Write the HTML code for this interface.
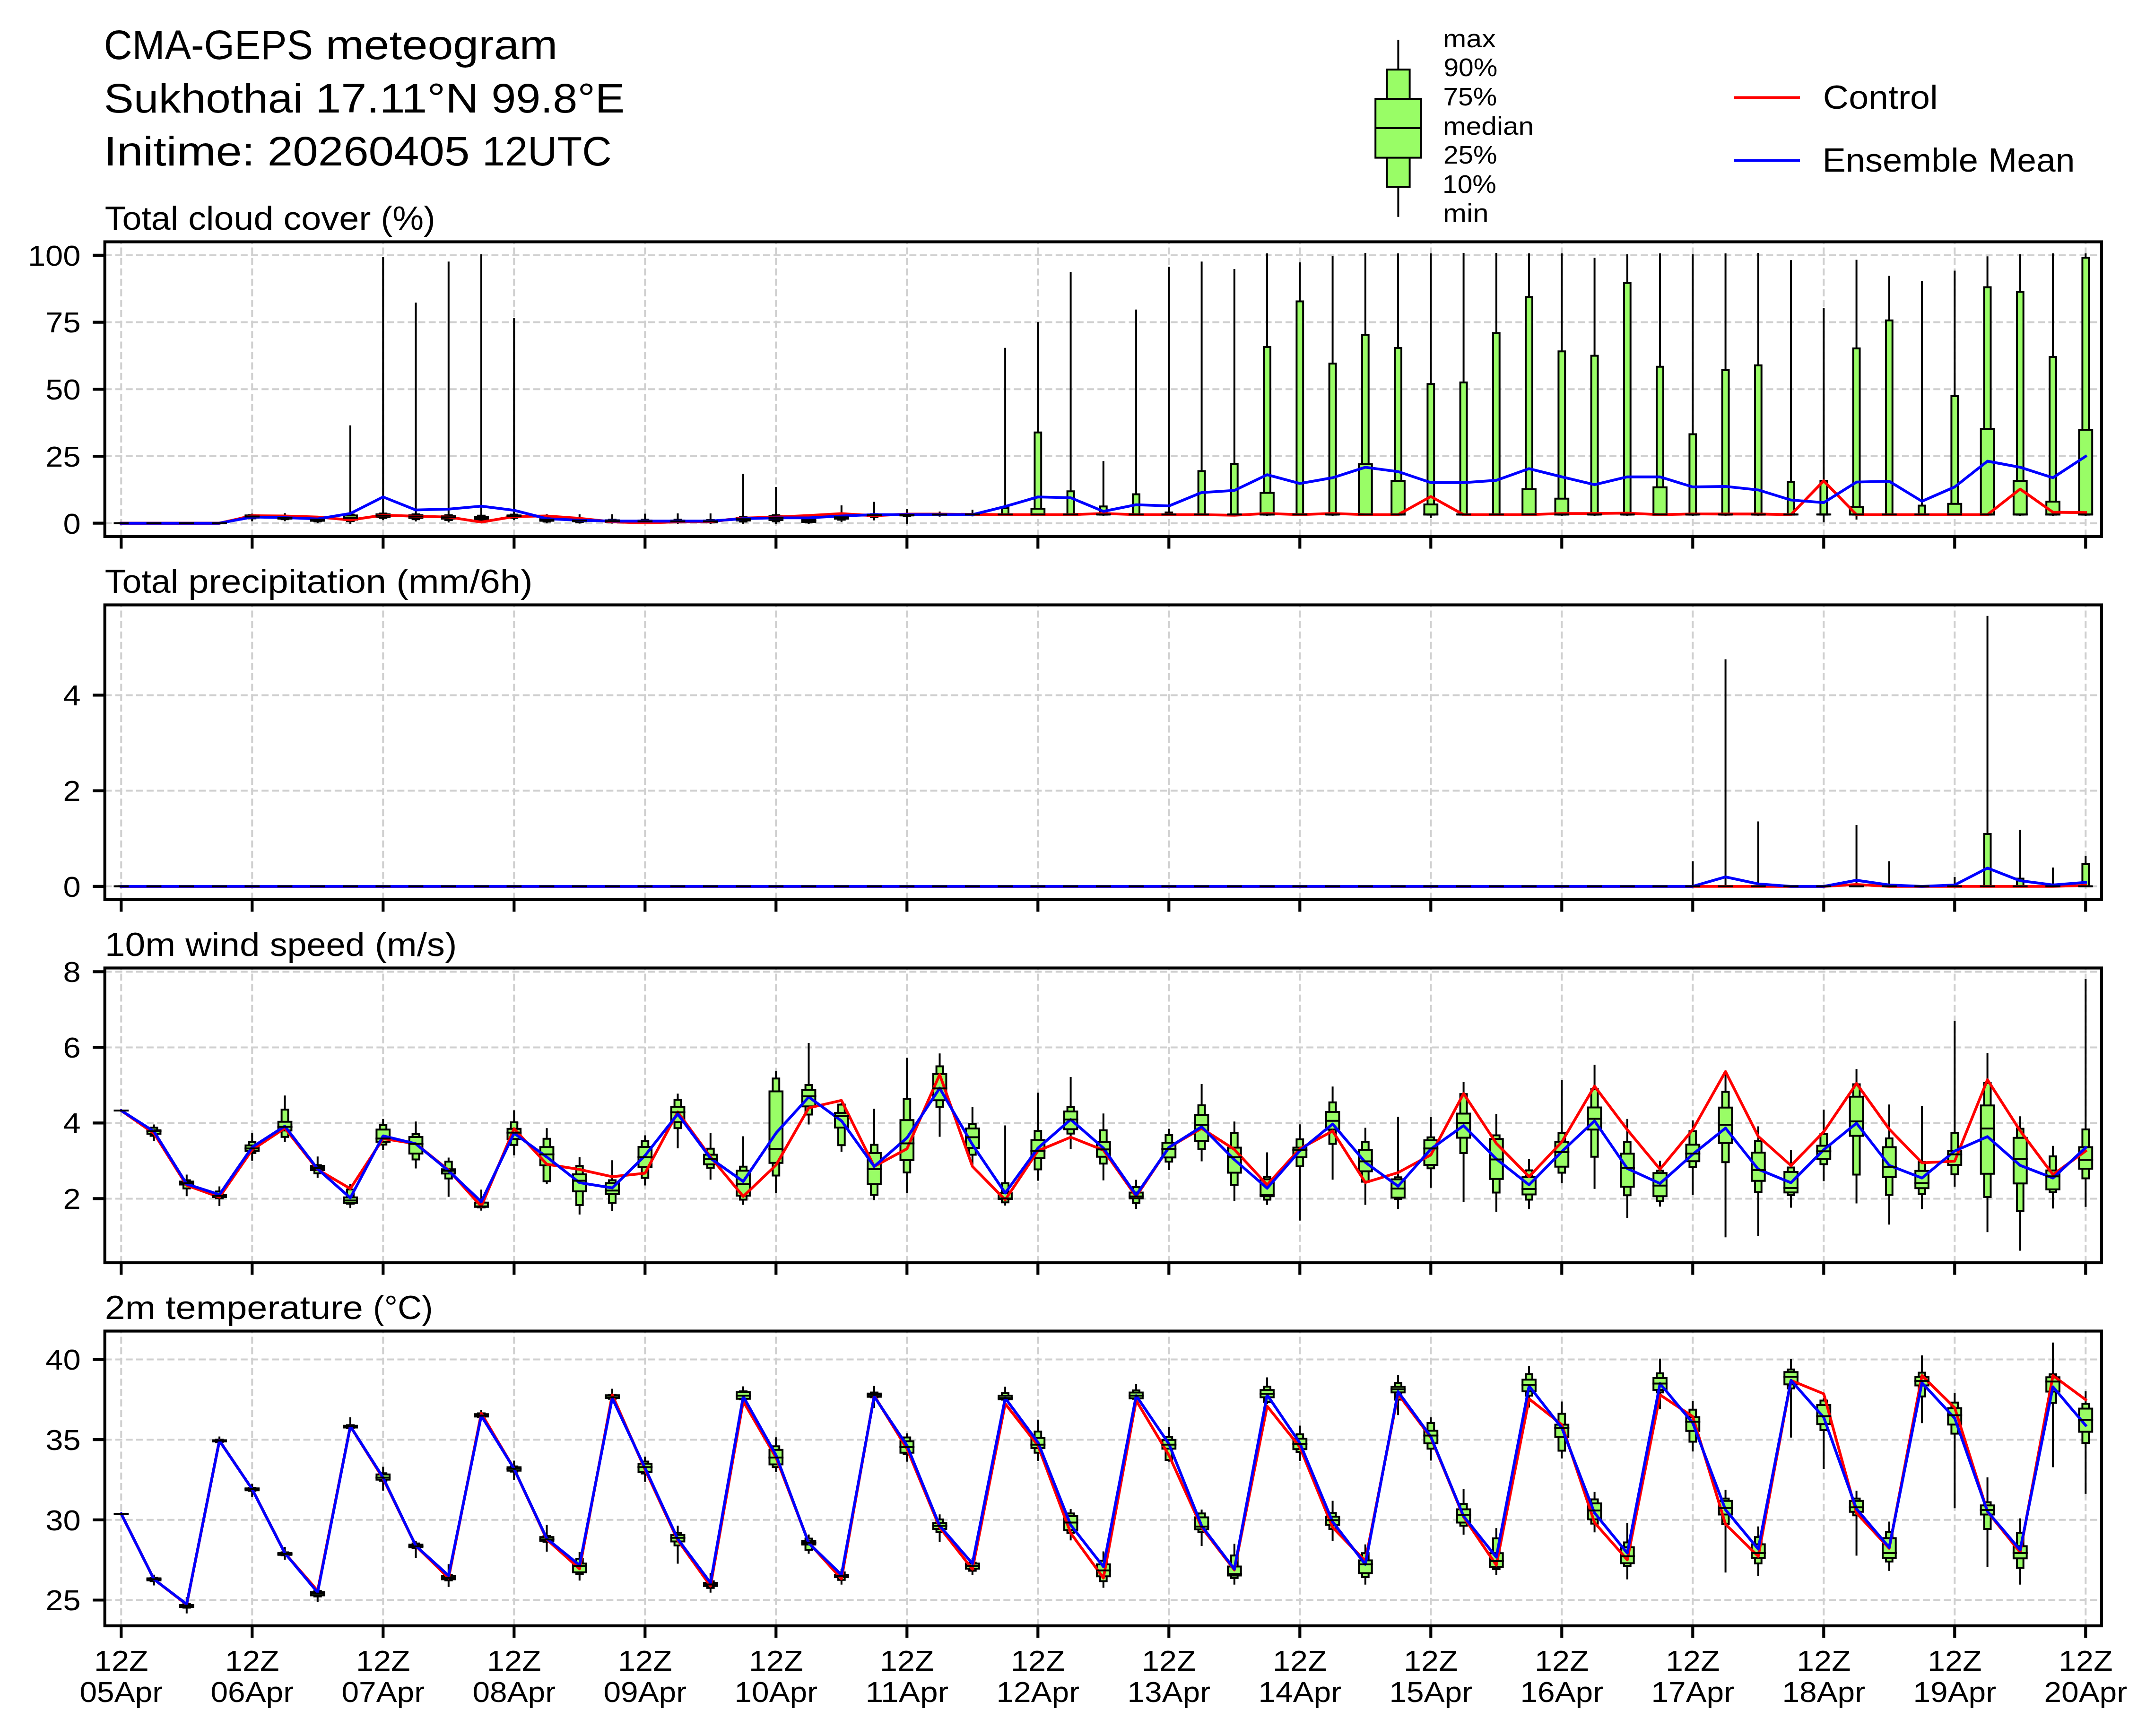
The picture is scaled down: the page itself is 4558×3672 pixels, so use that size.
<!DOCTYPE html>
<html><head><meta charset="utf-8"><style>
html,body{margin:0;padding:0;background:#fff;}
svg{display:block;}
text{font-family:"Liberation Sans",sans-serif;}
</style></head><body>
<svg width="4558" height="3672" viewBox="0 0 4558 3672">
<rect width="4558" height="3672" fill="#fff"/>
<text x="219.7" y="125.0" font-size="87.78" textLength="442.3" lengthAdjust="spacingAndGlyphs" fill="#000">CMA-GEPS</text>
<text x="688.7" y="125.0" font-size="87.78" textLength="490.7" lengthAdjust="spacingAndGlyphs" fill="#000">meteogram</text>
<text x="219.7" y="237.5" font-size="87.78" textLength="420.8" lengthAdjust="spacingAndGlyphs" fill="#000">Sukhothai</text>
<text x="667.2" y="237.5" font-size="87.78" textLength="345.3" lengthAdjust="spacingAndGlyphs" fill="#000">17.11°N</text>
<text x="1039.2" y="237.5" font-size="87.78" textLength="282.1" lengthAdjust="spacingAndGlyphs" fill="#000">99.8°E</text>
<text x="219.7" y="350.0" font-size="87.78" textLength="319.4" lengthAdjust="spacingAndGlyphs" fill="#000">Initime:</text>
<text x="565.8" y="350.0" font-size="87.78" textLength="427.6" lengthAdjust="spacingAndGlyphs" fill="#000">20260405</text>
<text x="1020.1" y="350.0" font-size="87.78" textLength="273.4" lengthAdjust="spacingAndGlyphs" fill="#000">12UTC</text>
<clipPath id="c0"><rect x="221.7" y="511.5" width="4223.3" height="623.5"/></clipPath>
<path d="M256.3 1135.0V511.5M533.3 1135.0V511.5M810.3 1135.0V511.5M1087.3 1135.0V511.5M1364.3 1135.0V511.5M1641.3 1135.0V511.5M1918.3 1135.0V511.5M2195.3 1135.0V511.5M2472.3 1135.0V511.5M2749.3 1135.0V511.5M3026.3 1135.0V511.5M3303.3 1135.0V511.5M3580.3 1135.0V511.5M3857.3 1135.0V511.5M4134.3 1135.0V511.5M4411.3 1135.0V511.5M221.7 1106.7H4445.0M221.7 965.0H4445.0M221.7 823.3H4445.0M221.7 681.6H4445.0M221.7 539.9H4445.0" stroke="#d0d0d0" stroke-width="4.02" stroke-dasharray="14.8 7.3" fill="none"/>
<g clip-path="url(#c0)">
<path d="M533.3 1088.6V1100.5M602.5 1087.4V1100.5M671.8 1093.1V1104.4M741.0 901.8V1106.4M810.3 546.1V1098.2M879.5 641.9V1101.0M948.8 555.3V1103.3M1018.0 539.8V1105.0M1087.3 675.1V1098.2M1156.5 1089.7V1105.0M1225.8 1089.7V1105.6M1295.0 1089.7V1105.6M1364.3 1088.6V1106.1M1433.5 1088.0V1106.1M1502.8 1088.0V1106.1M1572.0 1003.9V1106.1M1641.3 1031.9V1106.1M1710.5 1090.8V1106.1M1779.8 1071.0V1102.2M1849.0 1063.6V1098.8M1918.3 1078.4V1106.7M1987.5 1084.0V1090.8M2056.8 1080.1V1090.3M2126.1 737.7V1089.4M2195.3 683.2V1089.4M2264.6 577.4V1089.4M2333.8 977.3V1089.4M2403.1 656.7V1089.4M2472.3 566.3V1089.4M2541.6 555.3V1089.4M2610.8 571.1V1089.4M2680.1 538.0V1089.4M2749.3 557.1V1089.4M2818.6 543.1V1089.4M2887.8 536.9V1089.4M2957.1 538.0V1089.4M3026.3 538.0V1093.4M3095.6 536.9V1089.4M3164.8 536.9V1089.4M3234.1 538.0V1089.4M3303.3 538.0V1089.4M3372.6 547.2V1089.4M3441.8 539.8V1089.4M3511.1 538.0V1089.4M3580.3 539.8V1089.4M3649.6 538.0V1089.4M3718.8 536.9V1089.4M3788.1 552.3V1089.4M3857.3 653.0V1102.7M3926.6 551.6V1097.1M3995.8 585.5V1089.4M4065.1 596.6V1089.4M4134.3 574.5V1089.4M4203.6 544.2V1089.4M4272.8 539.8V1089.4M4342.1 538.0V1089.4M4411.3 538.0V1089.4" stroke="#000" stroke-width="4.00" stroke-linecap="square" fill="none"/>
<g fill="#99fd66" stroke="#000" stroke-width="4.00" stroke-linejoin="miter"><path d="M249.4 1106.7H263.2V1106.7H249.4Z"/><path d="M242.5 1106.7H270.2V1106.7H242.5Z"/><path d="M318.6 1106.7H332.5V1106.7H318.6Z"/><path d="M311.7 1106.7H339.4V1106.7H311.7Z"/><path d="M387.9 1106.7H401.7V1106.7H387.9Z"/><path d="M380.9 1106.7H408.7V1106.7H380.9Z"/><path d="M457.1 1106.7H471.0V1106.7H457.1Z"/><path d="M450.2 1106.7H477.9V1106.7H450.2Z"/><path d="M526.4 1089.7H540.2V1096.5H526.4Z"/><path d="M519.4 1090.3H547.1V1094.8H519.4Z"/><path d="M595.6 1091.4H609.5V1098.2H595.6Z"/><path d="M588.7 1093.7H616.4V1097.1H588.7Z"/><path d="M664.9 1095.4H678.7V1102.7H664.9Z"/><path d="M657.9 1096.5H685.6V1101.6H657.9Z"/><path d="M734.1 1088.6H748.0V1102.2H734.1Z"/><path d="M727.2 1090.3H754.9V1099.3H727.2Z"/><path d="M803.4 1086.3H817.2V1095.4H803.4Z"/><path d="M796.4 1088.0H824.1V1093.7H796.4Z"/><path d="M872.6 1088.0H886.5V1098.2H872.6Z"/><path d="M865.7 1089.7H893.4V1095.4H865.7Z"/><path d="M941.9 1089.7H955.7V1099.9H941.9Z"/><path d="M934.9 1092.0H962.6V1097.1H934.9Z"/><path d="M1011.1 1090.8H1025.0V1102.2H1011.1Z"/><path d="M1004.2 1093.1H1031.9V1099.3H1004.2Z"/><path d="M1080.4 1088.6H1094.2V1095.4H1080.4Z"/><path d="M1073.5 1090.3H1101.1V1093.7H1073.5Z"/><path d="M1149.6 1094.8H1163.5V1103.3H1149.6Z"/><path d="M1142.7 1097.1H1170.4V1101.6H1142.7Z"/><path d="M1218.9 1097.1H1232.7V1103.9H1218.9Z"/><path d="M1212.0 1098.8H1239.6V1102.7H1212.0Z"/><path d="M1288.1 1099.3H1302.0V1104.4H1288.1Z"/><path d="M1281.2 1100.5H1308.9V1103.9H1281.2Z"/><path d="M1357.4 1099.3H1371.2V1105.0H1357.4Z"/><path d="M1350.5 1101.0H1378.1V1103.9H1350.5Z"/><path d="M1426.6 1099.3H1440.5V1105.0H1426.6Z"/><path d="M1419.7 1101.0H1447.4V1103.9H1419.7Z"/><path d="M1495.9 1099.9H1509.7V1105.0H1495.9Z"/><path d="M1489.0 1101.0H1516.6V1103.9H1489.0Z"/><path d="M1565.1 1093.7H1579.0V1103.3H1565.1Z"/><path d="M1558.2 1095.4H1585.9V1101.0H1558.2Z"/><path d="M1634.4 1089.7H1648.2V1102.7H1634.4Z"/><path d="M1627.5 1092.0H1655.1V1099.9H1627.5Z"/><path d="M1703.6 1094.8H1717.5V1105.0H1703.6Z"/><path d="M1696.7 1097.1H1724.4V1103.9H1696.7Z"/><path d="M1772.9 1088.6H1786.7V1099.3H1772.9Z"/><path d="M1766.0 1090.8H1793.6V1097.1H1766.0Z"/><path d="M1842.1 1087.4H1856.0V1093.7H1842.1Z"/><path d="M1835.2 1088.6H1862.9V1091.4H1835.2Z"/><path d="M1911.4 1086.9H1925.2V1092.0H1911.4Z"/><path d="M1904.5 1088.0H1932.1V1090.3H1904.5Z"/><path d="M1980.6 1087.4H1994.5V1089.7H1980.6Z"/><path d="M1973.7 1088.0H2001.4V1089.1H1973.7Z"/><path d="M2049.9 1087.4H2063.7V1089.1H2049.9Z"/><path d="M2043.0 1088.0H2070.7V1088.6H2043.0Z"/><path d="M2119.1 1075.0H2133.0V1088.3H2119.1Z"/><path d="M2112.2 1088.3H2139.9V1088.3H2112.2Z"/><path d="M2188.4 914.7H2202.2V1088.3H2188.4Z"/><path d="M2181.5 1076.1H2209.2V1088.3H2181.5Z"/><path d="M2257.6 1039.3H2271.5V1088.3H2257.6Z"/><path d="M2250.7 1088.3H2278.4V1088.3H2250.7Z"/><path d="M2326.9 1071.3H2340.7V1088.3H2326.9Z"/><path d="M2320.0 1088.3H2347.7V1088.3H2320.0Z"/><path d="M2396.1 1045.5H2410.0V1088.3H2396.1Z"/><path d="M2389.2 1088.3H2416.9V1088.3H2389.2Z"/><path d="M2465.4 1084.0H2479.2V1088.3H2465.4Z"/><path d="M2458.5 1088.3H2486.2V1088.3H2458.5Z"/><path d="M2534.6 996.5H2548.5V1088.3H2534.6Z"/><path d="M2527.7 1088.3H2555.4V1088.3H2527.7Z"/><path d="M2603.9 981.0H2617.7V1088.3H2603.9Z"/><path d="M2597.0 1088.3H2624.7V1088.3H2597.0Z"/><path d="M2673.1 734.1H2687.0V1088.3H2673.1Z"/><path d="M2666.2 1042.6H2693.9V1088.3H2666.2Z"/><path d="M2742.4 637.5H2756.2V1088.3H2742.4Z"/><path d="M2735.5 1088.3H2763.2V1088.3H2735.5Z"/><path d="M2811.6 769.1H2825.5V1088.3H2811.6Z"/><path d="M2804.7 1088.3H2832.4V1088.3H2804.7Z"/><path d="M2880.9 708.3H2894.7V1088.3H2880.9Z"/><path d="M2874.0 982.1H2901.7V1088.3H2874.0Z"/><path d="M2950.1 735.9H2964.0V1088.3H2950.1Z"/><path d="M2943.2 1017.1H2970.9V1088.3H2943.2Z"/><path d="M3019.4 812.2H3033.2V1088.3H3019.4Z"/><path d="M3012.5 1066.9H3040.2V1088.3H3012.5Z"/><path d="M3088.6 808.9H3102.5V1088.3H3088.6Z"/><path d="M3081.7 1088.3H3109.4V1088.3H3081.7Z"/><path d="M3157.9 704.6H3171.7V1088.3H3157.9Z"/><path d="M3151.0 1088.3H3178.7V1088.3H3151.0Z"/><path d="M3227.1 628.3H3241.0V1088.3H3227.1Z"/><path d="M3220.2 1034.5H3247.9V1088.3H3220.2Z"/><path d="M3296.4 743.3H3310.2V1088.3H3296.4Z"/><path d="M3289.5 1054.7H3317.2V1088.3H3289.5Z"/><path d="M3365.6 752.5H3379.5V1088.3H3365.6Z"/><path d="M3358.7 1088.3H3386.4V1088.3H3358.7Z"/><path d="M3434.9 598.4H3448.7V1088.3H3434.9Z"/><path d="M3428.0 1088.3H3455.7V1088.3H3428.0Z"/><path d="M3504.1 775.7H3518.0V1088.3H3504.1Z"/><path d="M3497.2 1030.8H3524.9V1088.3H3497.2Z"/><path d="M3573.4 918.4H3587.2V1088.3H3573.4Z"/><path d="M3566.5 1088.3H3594.2V1088.3H3566.5Z"/><path d="M3642.6 783.1H3656.5V1088.3H3642.6Z"/><path d="M3635.7 1088.3H3663.4V1088.3H3635.7Z"/><path d="M3711.9 772.8H3725.7V1088.3H3711.9Z"/><path d="M3705.0 1088.3H3732.7V1088.3H3705.0Z"/><path d="M3781.1 1019.0H3795.0V1088.3H3781.1Z"/><path d="M3774.2 1088.3H3801.9V1088.3H3774.2Z"/><path d="M3850.4 1017.1H3864.2V1088.3H3850.4Z"/><path d="M3843.5 1088.3H3871.2V1088.3H3843.5Z"/><path d="M3919.6 737.0H3933.5V1088.3H3919.6Z"/><path d="M3912.7 1072.4H3940.4V1088.3H3912.7Z"/><path d="M3988.9 677.7H4002.7V1088.3H3988.9Z"/><path d="M3982.0 1088.3H4009.7V1088.3H3982.0Z"/><path d="M4058.1 1069.5H4072.0V1088.3H4058.1Z"/><path d="M4051.2 1088.3H4078.9V1088.3H4051.2Z"/><path d="M4127.4 838.0H4141.2V1088.3H4127.4Z"/><path d="M4120.4 1065.8H4148.2V1088.3H4120.4Z"/><path d="M4196.6 607.6H4210.5V1088.3H4196.6Z"/><path d="M4189.7 907.3H4217.4V1088.3H4189.7Z"/><path d="M4265.9 617.2H4279.7V1088.3H4265.9Z"/><path d="M4258.9 1017.1H4286.7V1088.3H4258.9Z"/><path d="M4335.1 755.1H4349.0V1088.3H4335.1Z"/><path d="M4328.2 1061.0H4355.9V1088.3H4328.2Z"/><path d="M4404.4 545.0H4418.2V1088.3H4404.4Z"/><path d="M4397.4 909.1H4425.2V1088.3H4397.4Z"/></g>
<polyline points="256.3,1106.7 325.6,1106.7 394.8,1106.7 464.1,1106.7 533.3,1090.8 602.5,1091.4 671.8,1093.7 741.0,1099.9 810.3,1089.7 879.5,1092.0 948.8,1093.7 1018.0,1104.4 1087.3,1092.5 1156.5,1091.4 1225.8,1096.5 1295.0,1103.9 1364.3,1106.1 1433.5,1103.9 1502.8,1103.3 1572.0,1095.9 1641.3,1093.7 1710.5,1090.3 1779.8,1086.3 1849.0,1090.8 1918.3,1087.4 1987.5,1087.4 2056.8,1088.0 2126.1,1088.6 2195.3,1088.6 2264.6,1088.6 2333.8,1086.1 2403.1,1088.6 2472.3,1088.6 2541.6,1088.6 2610.8,1089.8 2680.1,1086.1 2749.3,1088.6 2818.6,1086.1 2887.8,1088.6 2957.1,1088.6 3026.3,1050.3 3095.6,1088.6 3164.8,1088.6 3234.1,1088.6 3303.3,1086.1 3372.6,1086.1 3441.8,1085.3 3511.1,1088.6 3580.3,1087.2 3649.6,1087.2 3718.8,1087.2 3788.1,1088.6 3857.3,1017.1 3926.6,1088.6 3995.8,1088.6 4065.1,1088.6 4134.3,1088.6 4203.6,1088.6 4272.8,1034.5 4342.1,1083.5 4411.3,1084.2" fill="none" stroke="#ff0000" stroke-width="5.85" stroke-linejoin="round" stroke-linecap="square"/>
<polyline points="256.3,1106.7 325.6,1106.7 394.8,1106.7 464.1,1106.7 533.3,1093.7 602.5,1094.8 671.8,1097.6 741.0,1086.1 810.3,1051.1 879.5,1078.7 948.8,1076.9 1018.0,1070.6 1087.3,1079.4 1156.5,1097.1 1225.8,1100.5 1295.0,1102.2 1364.3,1102.2 1433.5,1102.2 1502.8,1102.2 1572.0,1097.1 1641.3,1095.4 1710.5,1095.4 1779.8,1091.4 1849.0,1088.6 1918.3,1088.6 1987.5,1088.6 2056.8,1088.6 2126.1,1071.3 2195.3,1051.1 2264.6,1052.9 2333.8,1081.6 2403.1,1067.6 2472.3,1070.2 2541.6,1041.8 2610.8,1037.4 2680.1,1004.2 2749.3,1022.7 2818.6,1010.5 2887.8,988.4 2957.1,997.6 3026.3,1020.8 3095.6,1020.8 3164.8,1016.0 3234.1,991.3 3303.3,1008.7 3372.6,1025.2 3441.8,1008.7 3511.1,1008.7 3580.3,1030.0 3649.6,1028.9 3718.8,1036.3 3788.1,1057.7 3857.3,1063.2 3926.6,1019.7 3995.8,1017.9 4065.1,1060.3 4134.3,1030.0 4203.6,975.5 4272.8,988.4 4342.1,1010.5 4411.3,965.2" fill="none" stroke="#0000ff" stroke-width="5.85" stroke-linejoin="round" stroke-linecap="square"/>
<path d="M242.5 1106.7h27.7M311.7 1106.7h27.7M380.9 1106.7h27.7M450.2 1106.7h27.7M519.4 1092.5h27.7M588.7 1095.4h27.7M657.9 1099.3h27.7M727.2 1095.4h27.7M796.4 1090.8h27.7M865.7 1092.5h27.7M934.9 1094.2h27.7M1004.2 1096.5h27.7M1073.5 1092.0h27.7M1142.7 1099.3h27.7M1212.0 1101.0h27.7M1281.2 1102.2h27.7M1350.5 1102.7h27.7M1419.7 1102.7h27.7M1489.0 1102.7h27.7M1558.2 1098.2h27.7M1627.5 1095.4h27.7M1696.7 1101.0h27.7M1766.0 1094.2h27.7M1835.2 1089.7h27.7M1904.5 1089.1h27.7M1973.7 1088.6h27.7M2043.0 1088.3h27.7M2112.2 1088.3h27.7M2181.5 1088.3h27.7M2250.7 1088.3h27.7M2320.0 1088.3h27.7M2389.2 1088.3h27.7M2458.5 1088.3h27.7M2527.7 1088.3h27.7M2597.0 1088.3h27.7M2666.2 1088.3h27.7M2735.5 1088.3h27.7M2804.7 1088.3h27.7M2874.0 1088.3h27.7M2943.2 1088.3h27.7M3012.5 1088.3h27.7M3081.7 1088.3h27.7M3151.0 1088.3h27.7M3220.2 1088.3h27.7M3289.5 1088.3h27.7M3358.7 1088.3h27.7M3428.0 1088.3h27.7M3497.2 1088.3h27.7M3566.5 1088.3h27.7M3635.7 1088.3h27.7M3705.0 1088.3h27.7M3774.2 1088.3h27.7M3843.5 1088.3h27.7M3912.7 1088.3h27.7M3982.0 1088.3h27.7M4051.2 1088.3h27.7M4120.4 1088.3h27.7M4189.7 1088.3h27.7M4258.9 1088.3h27.7M4328.2 1088.3h27.7M4397.4 1088.3h27.7" stroke="#000" stroke-width="4.00" stroke-linecap="square" fill="none"/>
</g>
<rect x="221.7" y="511.5" width="4223.3" height="623.5" fill="none" stroke="#000" stroke-width="6.20" stroke-linejoin="miter"/>
<path d="M256.3 1135.0v25.6M533.3 1135.0v25.6M810.3 1135.0v25.6M1087.3 1135.0v25.6M1364.3 1135.0v25.6M1641.3 1135.0v25.6M1918.3 1135.0v25.6M2195.3 1135.0v25.6M2472.3 1135.0v25.6M2749.3 1135.0v25.6M3026.3 1135.0v25.6M3303.3 1135.0v25.6M3580.3 1135.0v25.6M3857.3 1135.0v25.6M4134.3 1135.0v25.6M4411.3 1135.0v25.6M221.7 1106.7h-25.6M221.7 965.0h-25.6M221.7 823.3h-25.6M221.7 681.6h-25.6M221.7 539.9h-25.6" stroke="#000" stroke-width="6.20" fill="none"/>
<text x="133.4" y="1128.5" font-size="61.13" textLength="37.2" lengthAdjust="spacingAndGlyphs" fill="#000">0</text>
<text x="96.2" y="986.8" font-size="61.13" textLength="74.4" lengthAdjust="spacingAndGlyphs" fill="#000">25</text>
<text x="96.2" y="845.1" font-size="61.13" textLength="74.4" lengthAdjust="spacingAndGlyphs" fill="#000">50</text>
<text x="96.2" y="703.4" font-size="61.13" textLength="74.4" lengthAdjust="spacingAndGlyphs" fill="#000">75</text>
<text x="58.9" y="561.7" font-size="61.13" textLength="111.7" lengthAdjust="spacingAndGlyphs" fill="#000">100</text>
<text x="221.8" y="485.9" font-size="69.49" textLength="155.3" lengthAdjust="spacingAndGlyphs" fill="#000">Total</text>
<text x="398.2" y="485.9" font-size="69.49" textLength="180.1" lengthAdjust="spacingAndGlyphs" fill="#000">cloud</text>
<text x="599.5" y="485.9" font-size="69.49" textLength="184.9" lengthAdjust="spacingAndGlyphs" fill="#000">cover</text>
<text x="805.5" y="485.9" font-size="69.49" textLength="115.1" lengthAdjust="spacingAndGlyphs" fill="#000">(%)</text>
<clipPath id="c1"><rect x="221.7" y="1279.5" width="4223.3" height="623.5"/></clipPath>
<path d="M256.3 1903.0V1279.5M533.3 1903.0V1279.5M810.3 1903.0V1279.5M1087.3 1903.0V1279.5M1364.3 1903.0V1279.5M1641.3 1903.0V1279.5M1918.3 1903.0V1279.5M2195.3 1903.0V1279.5M2472.3 1903.0V1279.5M2749.3 1903.0V1279.5M3026.3 1903.0V1279.5M3303.3 1903.0V1279.5M3580.3 1903.0V1279.5M3857.3 1903.0V1279.5M4134.3 1903.0V1279.5M4411.3 1903.0V1279.5M221.7 1874.8H4445.0M221.7 1672.6H4445.0M221.7 1470.4H4445.0" stroke="#d0d0d0" stroke-width="4.02" stroke-dasharray="14.8 7.3" fill="none"/>
<g clip-path="url(#c1)">
<path d="M3580.3 1823.7V1874.8M3649.6 1396.5V1874.8M3718.8 1739.5V1874.8M3926.6 1747.0V1874.8M3995.8 1823.7V1874.8M4134.3 1857.1V1874.8M4203.6 1304.7V1874.8M4272.8 1757.3V1874.8M4342.1 1837.0V1874.8M4411.3 1812.5V1874.8" stroke="#000" stroke-width="4.00" stroke-linecap="square" fill="none"/>
<g fill="#99fd66" stroke="#000" stroke-width="4.00" stroke-linejoin="miter"><path d="M249.4 1874.8H263.2V1874.8H249.4Z"/><path d="M242.5 1874.8H270.2V1874.8H242.5Z"/><path d="M318.6 1874.8H332.5V1874.8H318.6Z"/><path d="M311.7 1874.8H339.4V1874.8H311.7Z"/><path d="M387.9 1874.8H401.7V1874.8H387.9Z"/><path d="M380.9 1874.8H408.7V1874.8H380.9Z"/><path d="M457.1 1874.8H471.0V1874.8H457.1Z"/><path d="M450.2 1874.8H477.9V1874.8H450.2Z"/><path d="M526.4 1874.8H540.2V1874.8H526.4Z"/><path d="M519.4 1874.8H547.1V1874.8H519.4Z"/><path d="M595.6 1874.8H609.5V1874.8H595.6Z"/><path d="M588.7 1874.8H616.4V1874.8H588.7Z"/><path d="M664.9 1874.8H678.7V1874.8H664.9Z"/><path d="M657.9 1874.8H685.6V1874.8H657.9Z"/><path d="M734.1 1874.8H748.0V1874.8H734.1Z"/><path d="M727.2 1874.8H754.9V1874.8H727.2Z"/><path d="M803.4 1874.8H817.2V1874.8H803.4Z"/><path d="M796.4 1874.8H824.1V1874.8H796.4Z"/><path d="M872.6 1874.8H886.5V1874.8H872.6Z"/><path d="M865.7 1874.8H893.4V1874.8H865.7Z"/><path d="M941.9 1874.8H955.7V1874.8H941.9Z"/><path d="M934.9 1874.8H962.6V1874.8H934.9Z"/><path d="M1011.1 1874.8H1025.0V1874.8H1011.1Z"/><path d="M1004.2 1874.8H1031.9V1874.8H1004.2Z"/><path d="M1080.4 1874.8H1094.2V1874.8H1080.4Z"/><path d="M1073.5 1874.8H1101.1V1874.8H1073.5Z"/><path d="M1149.6 1874.8H1163.5V1874.8H1149.6Z"/><path d="M1142.7 1874.8H1170.4V1874.8H1142.7Z"/><path d="M1218.9 1874.8H1232.7V1874.8H1218.9Z"/><path d="M1212.0 1874.8H1239.6V1874.8H1212.0Z"/><path d="M1288.1 1874.8H1302.0V1874.8H1288.1Z"/><path d="M1281.2 1874.8H1308.9V1874.8H1281.2Z"/><path d="M1357.4 1874.8H1371.2V1874.8H1357.4Z"/><path d="M1350.5 1874.8H1378.1V1874.8H1350.5Z"/><path d="M1426.6 1874.8H1440.5V1874.8H1426.6Z"/><path d="M1419.7 1874.8H1447.4V1874.8H1419.7Z"/><path d="M1495.9 1874.8H1509.7V1874.8H1495.9Z"/><path d="M1489.0 1874.8H1516.6V1874.8H1489.0Z"/><path d="M1565.1 1874.8H1579.0V1874.8H1565.1Z"/><path d="M1558.2 1874.8H1585.9V1874.8H1558.2Z"/><path d="M1634.4 1874.8H1648.2V1874.8H1634.4Z"/><path d="M1627.5 1874.8H1655.1V1874.8H1627.5Z"/><path d="M1703.6 1874.8H1717.5V1874.8H1703.6Z"/><path d="M1696.7 1874.8H1724.4V1874.8H1696.7Z"/><path d="M1772.9 1874.8H1786.7V1874.8H1772.9Z"/><path d="M1766.0 1874.8H1793.6V1874.8H1766.0Z"/><path d="M1842.1 1874.8H1856.0V1874.8H1842.1Z"/><path d="M1835.2 1874.8H1862.9V1874.8H1835.2Z"/><path d="M1911.4 1874.8H1925.2V1874.8H1911.4Z"/><path d="M1904.5 1874.8H1932.1V1874.8H1904.5Z"/><path d="M1980.6 1874.8H1994.5V1874.8H1980.6Z"/><path d="M1973.7 1874.8H2001.4V1874.8H1973.7Z"/><path d="M2049.9 1874.8H2063.7V1874.8H2049.9Z"/><path d="M2043.0 1874.8H2070.7V1874.8H2043.0Z"/><path d="M2119.1 1874.8H2133.0V1874.8H2119.1Z"/><path d="M2112.2 1874.8H2139.9V1874.8H2112.2Z"/><path d="M2188.4 1874.8H2202.2V1874.8H2188.4Z"/><path d="M2181.5 1874.8H2209.2V1874.8H2181.5Z"/><path d="M2257.6 1874.8H2271.5V1874.8H2257.6Z"/><path d="M2250.7 1874.8H2278.4V1874.8H2250.7Z"/><path d="M2326.9 1874.8H2340.7V1874.8H2326.9Z"/><path d="M2320.0 1874.8H2347.7V1874.8H2320.0Z"/><path d="M2396.1 1874.8H2410.0V1874.8H2396.1Z"/><path d="M2389.2 1874.8H2416.9V1874.8H2389.2Z"/><path d="M2465.4 1874.8H2479.2V1874.8H2465.4Z"/><path d="M2458.5 1874.8H2486.2V1874.8H2458.5Z"/><path d="M2534.6 1874.8H2548.5V1874.8H2534.6Z"/><path d="M2527.7 1874.8H2555.4V1874.8H2527.7Z"/><path d="M2603.9 1874.8H2617.7V1874.8H2603.9Z"/><path d="M2597.0 1874.8H2624.7V1874.8H2597.0Z"/><path d="M2673.1 1874.8H2687.0V1874.8H2673.1Z"/><path d="M2666.2 1874.8H2693.9V1874.8H2666.2Z"/><path d="M2742.4 1874.8H2756.2V1874.8H2742.4Z"/><path d="M2735.5 1874.8H2763.2V1874.8H2735.5Z"/><path d="M2811.6 1874.8H2825.5V1874.8H2811.6Z"/><path d="M2804.7 1874.8H2832.4V1874.8H2804.7Z"/><path d="M2880.9 1874.8H2894.7V1874.8H2880.9Z"/><path d="M2874.0 1874.8H2901.7V1874.8H2874.0Z"/><path d="M2950.1 1874.8H2964.0V1874.8H2950.1Z"/><path d="M2943.2 1874.8H2970.9V1874.8H2943.2Z"/><path d="M3019.4 1874.8H3033.2V1874.8H3019.4Z"/><path d="M3012.5 1874.8H3040.2V1874.8H3012.5Z"/><path d="M3088.6 1874.8H3102.5V1874.8H3088.6Z"/><path d="M3081.7 1874.8H3109.4V1874.8H3081.7Z"/><path d="M3157.9 1874.8H3171.7V1874.8H3157.9Z"/><path d="M3151.0 1874.8H3178.7V1874.8H3151.0Z"/><path d="M3227.1 1874.8H3241.0V1874.8H3227.1Z"/><path d="M3220.2 1874.8H3247.9V1874.8H3220.2Z"/><path d="M3296.4 1874.8H3310.2V1874.8H3296.4Z"/><path d="M3289.5 1874.8H3317.2V1874.8H3289.5Z"/><path d="M3365.6 1874.8H3379.5V1874.8H3365.6Z"/><path d="M3358.7 1874.8H3386.4V1874.8H3358.7Z"/><path d="M3434.9 1874.8H3448.7V1874.8H3434.9Z"/><path d="M3428.0 1874.8H3455.7V1874.8H3428.0Z"/><path d="M3504.1 1874.8H3518.0V1874.8H3504.1Z"/><path d="M3497.2 1874.8H3524.9V1874.8H3497.2Z"/><path d="M3573.4 1874.8H3587.2V1874.8H3573.4Z"/><path d="M3566.5 1874.8H3594.2V1874.8H3566.5Z"/><path d="M3642.6 1874.8H3656.5V1874.8H3642.6Z"/><path d="M3635.7 1874.8H3663.4V1874.8H3635.7Z"/><path d="M3711.9 1874.8H3725.7V1874.8H3711.9Z"/><path d="M3705.0 1874.8H3732.7V1874.8H3705.0Z"/><path d="M3781.1 1874.8H3795.0V1874.8H3781.1Z"/><path d="M3774.2 1874.8H3801.9V1874.8H3774.2Z"/><path d="M3850.4 1874.8H3864.2V1874.8H3850.4Z"/><path d="M3843.5 1874.8H3871.2V1874.8H3843.5Z"/><path d="M3919.6 1874.8H3933.5V1874.8H3919.6Z"/><path d="M3912.7 1874.8H3940.4V1874.8H3912.7Z"/><path d="M3988.9 1874.8H4002.7V1874.8H3988.9Z"/><path d="M3982.0 1874.8H4009.7V1874.8H3982.0Z"/><path d="M4058.1 1874.8H4072.0V1874.8H4058.1Z"/><path d="M4051.2 1874.8H4078.9V1874.8H4051.2Z"/><path d="M4127.4 1874.8H4141.2V1874.8H4127.4Z"/><path d="M4120.4 1874.8H4148.2V1874.8H4120.4Z"/><path d="M4196.6 1764.0H4210.5V1874.8H4196.6Z"/><path d="M4189.7 1874.8H4217.4V1874.8H4189.7Z"/><path d="M4265.9 1858.4H4279.7V1874.8H4265.9Z"/><path d="M4258.9 1874.8H4286.7V1874.8H4258.9Z"/><path d="M4335.1 1874.8H4349.0V1874.8H4335.1Z"/><path d="M4328.2 1874.8H4355.9V1874.8H4328.2Z"/><path d="M4404.4 1828.1H4418.2V1874.8H4404.4Z"/><path d="M4397.4 1874.8H4425.2V1874.8H4397.4Z"/></g>
<polyline points="256.3,1874.8 325.6,1874.8 394.8,1874.8 464.1,1874.8 533.3,1874.8 602.5,1874.8 671.8,1874.8 741.0,1874.8 810.3,1874.8 879.5,1874.8 948.8,1874.8 1018.0,1874.8 1087.3,1874.8 1156.5,1874.8 1225.8,1874.8 1295.0,1874.8 1364.3,1874.8 1433.5,1874.8 1502.8,1874.8 1572.0,1874.8 1641.3,1874.8 1710.5,1874.8 1779.8,1874.8 1849.0,1874.8 1918.3,1874.8 1987.5,1874.8 2056.8,1874.8 2126.1,1874.8 2195.3,1874.8 2264.6,1874.8 2333.8,1874.8 2403.1,1874.8 2472.3,1874.8 2541.6,1874.8 2610.8,1874.8 2680.1,1874.8 2749.3,1874.8 2818.6,1874.8 2887.8,1874.8 2957.1,1874.8 3026.3,1874.8 3095.6,1874.8 3164.8,1874.8 3234.1,1874.8 3303.3,1874.8 3372.6,1874.8 3441.8,1874.8 3511.1,1874.8 3580.3,1874.8 3649.6,1874.8 3718.8,1874.8 3788.1,1874.8 3857.3,1874.8 3926.6,1870.8 3995.8,1874.8 4065.1,1874.8 4134.3,1874.8 4203.6,1874.8 4272.8,1874.8 4342.1,1874.8 4411.3,1872.8" fill="none" stroke="#ff0000" stroke-width="5.85" stroke-linejoin="round" stroke-linecap="square"/>
<polyline points="256.3,1874.8 325.6,1874.8 394.8,1874.8 464.1,1874.8 533.3,1874.8 602.5,1874.8 671.8,1874.8 741.0,1874.8 810.3,1874.8 879.5,1874.8 948.8,1874.8 1018.0,1874.8 1087.3,1874.8 1156.5,1874.8 1225.8,1874.8 1295.0,1874.8 1364.3,1874.8 1433.5,1874.8 1502.8,1874.8 1572.0,1874.8 1641.3,1874.8 1710.5,1874.8 1779.8,1874.8 1849.0,1874.8 1918.3,1874.8 1987.5,1874.8 2056.8,1874.8 2126.1,1874.8 2195.3,1874.8 2264.6,1874.8 2333.8,1874.8 2403.1,1874.8 2472.3,1874.8 2541.6,1874.8 2610.8,1874.8 2680.1,1874.8 2749.3,1874.8 2818.6,1874.8 2887.8,1874.8 2957.1,1874.8 3026.3,1874.8 3095.6,1874.8 3164.8,1874.8 3234.1,1874.8 3303.3,1874.8 3372.6,1874.8 3441.8,1874.8 3511.1,1874.8 3580.3,1874.8 3649.6,1854.9 3718.8,1869.6 3788.1,1874.8 3857.3,1874.8 3926.6,1862.0 3995.8,1871.8 4065.1,1874.8 4134.3,1871.8 4203.6,1836.1 4272.8,1862.9 4342.1,1871.8 4411.3,1866.4" fill="none" stroke="#0000ff" stroke-width="5.85" stroke-linejoin="round" stroke-linecap="square"/>
<path d="M242.5 1874.8h27.7M311.7 1874.8h27.7M380.9 1874.8h27.7M450.2 1874.8h27.7M519.4 1874.8h27.7M588.7 1874.8h27.7M657.9 1874.8h27.7M727.2 1874.8h27.7M796.4 1874.8h27.7M865.7 1874.8h27.7M934.9 1874.8h27.7M1004.2 1874.8h27.7M1073.5 1874.8h27.7M1142.7 1874.8h27.7M1212.0 1874.8h27.7M1281.2 1874.8h27.7M1350.5 1874.8h27.7M1419.7 1874.8h27.7M1489.0 1874.8h27.7M1558.2 1874.8h27.7M1627.5 1874.8h27.7M1696.7 1874.8h27.7M1766.0 1874.8h27.7M1835.2 1874.8h27.7M1904.5 1874.8h27.7M1973.7 1874.8h27.7M2043.0 1874.8h27.7M2112.2 1874.8h27.7M2181.5 1874.8h27.7M2250.7 1874.8h27.7M2320.0 1874.8h27.7M2389.2 1874.8h27.7M2458.5 1874.8h27.7M2527.7 1874.8h27.7M2597.0 1874.8h27.7M2666.2 1874.8h27.7M2735.5 1874.8h27.7M2804.7 1874.8h27.7M2874.0 1874.8h27.7M2943.2 1874.8h27.7M3012.5 1874.8h27.7M3081.7 1874.8h27.7M3151.0 1874.8h27.7M3220.2 1874.8h27.7M3289.5 1874.8h27.7M3358.7 1874.8h27.7M3428.0 1874.8h27.7M3497.2 1874.8h27.7M3566.5 1874.8h27.7M3635.7 1874.8h27.7M3705.0 1874.8h27.7M3774.2 1874.8h27.7M3843.5 1874.8h27.7M3912.7 1874.8h27.7M3982.0 1874.8h27.7M4051.2 1874.8h27.7M4120.4 1874.8h27.7M4189.7 1874.8h27.7M4258.9 1874.8h27.7M4328.2 1874.8h27.7M4397.4 1874.8h27.7" stroke="#000" stroke-width="4.00" stroke-linecap="square" fill="none"/>
</g>
<rect x="221.7" y="1279.5" width="4223.3" height="623.5" fill="none" stroke="#000" stroke-width="6.20" stroke-linejoin="miter"/>
<path d="M256.3 1903.0v25.6M533.3 1903.0v25.6M810.3 1903.0v25.6M1087.3 1903.0v25.6M1364.3 1903.0v25.6M1641.3 1903.0v25.6M1918.3 1903.0v25.6M2195.3 1903.0v25.6M2472.3 1903.0v25.6M2749.3 1903.0v25.6M3026.3 1903.0v25.6M3303.3 1903.0v25.6M3580.3 1903.0v25.6M3857.3 1903.0v25.6M4134.3 1903.0v25.6M4411.3 1903.0v25.6M221.7 1874.8h-25.6M221.7 1672.6h-25.6M221.7 1470.4h-25.6" stroke="#000" stroke-width="6.20" fill="none"/>
<text x="133.4" y="1896.6" font-size="61.13" textLength="37.2" lengthAdjust="spacingAndGlyphs" fill="#000">0</text>
<text x="133.4" y="1694.4" font-size="61.13" textLength="37.2" lengthAdjust="spacingAndGlyphs" fill="#000">2</text>
<text x="133.4" y="1492.2" font-size="61.13" textLength="37.2" lengthAdjust="spacingAndGlyphs" fill="#000">4</text>
<text x="221.8" y="1253.9" font-size="69.49" textLength="155.3" lengthAdjust="spacingAndGlyphs" fill="#000">Total</text>
<text x="398.2" y="1253.9" font-size="69.49" textLength="418.9" lengthAdjust="spacingAndGlyphs" fill="#000">precipitation</text>
<text x="838.3" y="1253.9" font-size="69.49" textLength="288.3" lengthAdjust="spacingAndGlyphs" fill="#000">(mm/6h)</text>
<clipPath id="c2"><rect x="221.7" y="2047.5" width="4223.3" height="623.5"/></clipPath>
<path d="M256.3 2671.0V2047.5M533.3 2671.0V2047.5M810.3 2671.0V2047.5M1087.3 2671.0V2047.5M1364.3 2671.0V2047.5M1641.3 2671.0V2047.5M1918.3 2671.0V2047.5M2195.3 2671.0V2047.5M2472.3 2671.0V2047.5M2749.3 2671.0V2047.5M3026.3 2671.0V2047.5M3303.3 2671.0V2047.5M3580.3 2671.0V2047.5M3857.3 2671.0V2047.5M4134.3 2671.0V2047.5M4411.3 2671.0V2047.5M221.7 2535.4H4445.0M221.7 2375.4H4445.0M221.7 2215.4H4445.0M221.7 2055.4H4445.0" stroke="#d0d0d0" stroke-width="4.02" stroke-dasharray="14.8 7.3" fill="none"/>
<g clip-path="url(#c2)">
<path d="M325.6 2380.6V2411.2M394.8 2486.4V2528.2M464.1 2511.5V2549.0M533.3 2398.7V2453.0M602.5 2319.3V2414.0M671.8 2448.3V2489.2M741.0 2505.9V2553.2M810.3 2368.8V2430.0M879.5 2374.3V2469.6M948.8 2450.6V2529.4M1018.0 2518.3V2558.7M1087.3 2350.4V2441.7M1156.5 2388.3V2502.4M1225.8 2449.5V2567.0M1295.0 2456.2V2560.0M1364.3 2403.4V2505.4M1433.5 2315.2V2427.0M1502.8 2399.1V2493.3M1572.0 2405.4V2546.5M1641.3 2268.0V2522.1M1710.5 2208.1V2376.6M1779.8 2334.8V2434.2M1849.0 2347.2V2536.5M1918.3 2239.8V2522.1M1987.5 2230.3V2402.5M2056.8 2344.1V2461.6M2126.1 2382.4V2548.0M2195.3 2313.2V2495.6M2264.6 2280.1V2428.5M2333.8 2357.3V2494.7M2403.1 2497.6V2555.2M2472.3 2389.6V2473.1M2541.6 2295.1V2454.4M2610.8 2374.3V2537.9M2680.1 2439.4V2546.5M2749.3 2380.3V2579.7M2818.6 2300.3V2493.3M2887.8 2387.5V2546.5M2957.1 2364.2V2555.2M3026.3 2364.2V2510.5M3095.6 2291.1V2540.8M3164.8 2357.9V2561.0M3234.1 2452.9V2555.2M3303.3 2285.9V2500.5M3372.6 2254.2V2512.8M3441.8 2368.8V2573.9M3511.1 2457.3V2550.3M3580.3 2371.9V2525.6M3649.6 2267.4V2615.2M3718.8 2384.6V2612.1M3788.1 2434.7V2552.5M3857.3 2349.1V2496.4M3926.6 2263.2V2543.6M3995.8 2338.2V2588.2M4065.1 2341.8V2555.4M4134.3 2162.1V2507.9M4203.6 2229.3V2604.3M4272.8 2363.2V2643.6M4342.1 2425.7V2554.3M4411.3 2072.9V2550.7" stroke="#000" stroke-width="4.00" stroke-linecap="square" fill="none"/>
<g fill="#99fd66" stroke="#000" stroke-width="4.00" stroke-linejoin="miter"><path d="M249.4 2349.0H263.2V2349.0H249.4Z"/><path d="M242.5 2349.0H270.2V2349.0H242.5Z"/><path d="M318.6 2385.2H332.5V2402.5H318.6Z"/><path d="M311.7 2390.8H339.4V2398.3H311.7Z"/><path d="M387.9 2496.6H401.7V2513.8H387.9Z"/><path d="M380.9 2499.3H408.7V2505.5H380.9Z"/><path d="M457.1 2520.2H471.0V2534.7H457.1Z"/><path d="M450.2 2527.2H477.9V2531.9H450.2Z"/><path d="M526.4 2415.8H540.2V2438.7H526.4Z"/><path d="M519.4 2422.8H547.1V2434.5H519.4Z"/><path d="M595.6 2347.0H609.5V2404.7H595.6Z"/><path d="M588.7 2372.7H616.4V2391.3H588.7Z"/><path d="M664.9 2464.5H678.7V2481.8H664.9Z"/><path d="M657.9 2465.9H685.6V2474.9H657.9Z"/><path d="M734.1 2516.0H748.0V2545.9H734.1Z"/><path d="M727.2 2532.7H754.9V2544.5H727.2Z"/><path d="M803.4 2380.0H817.2V2421.0H803.4Z"/><path d="M796.4 2389.2H824.1V2414.9H796.4Z"/><path d="M872.6 2399.0H886.5V2452.4H872.6Z"/><path d="M865.7 2405.1H893.4V2439.9H865.7Z"/><path d="M941.9 2456.9H955.7V2492.8H941.9Z"/><path d="M934.9 2473.3H962.6V2482.2H934.9Z"/><path d="M1011.1 2543.7H1025.0V2554.1H1011.1Z"/><path d="M1004.2 2543.7H1031.9V2552.7H1004.2Z"/><path d="M1080.4 2373.9H1094.2V2421.8H1080.4Z"/><path d="M1073.5 2387.8H1101.1V2409.3H1073.5Z"/><path d="M1149.6 2408.7H1163.5V2498.4H1149.6Z"/><path d="M1142.7 2426.3H1170.4V2465.0H1142.7Z"/><path d="M1218.9 2466.3H1232.7V2549.1H1218.9Z"/><path d="M1212.0 2483.9H1239.6V2520.1H1212.0Z"/><path d="M1288.1 2496.4H1302.0V2544.3H1288.1Z"/><path d="M1281.2 2502.5H1308.9V2525.7H1281.2Z"/><path d="M1357.4 2413.8H1371.2V2491.5H1357.4Z"/><path d="M1350.5 2425.9H1378.1V2468.4H1350.5Z"/><path d="M1426.6 2326.6H1440.5V2386.3H1426.6Z"/><path d="M1419.7 2341.0H1447.4V2373.4H1419.7Z"/><path d="M1495.9 2429.7H1509.7V2469.9H1495.9Z"/><path d="M1489.0 2442.6H1516.6V2462.7H1489.0Z"/><path d="M1565.1 2467.7H1579.0V2537.5H1565.1Z"/><path d="M1558.2 2476.3H1585.9V2528.9H1558.2Z"/><path d="M1634.4 2281.3H1648.2V2486.6H1634.4Z"/><path d="M1627.5 2308.4H1655.1V2459.8H1627.5Z"/><path d="M1703.6 2294.9H1717.5V2357.5H1703.6Z"/><path d="M1696.7 2305.5H1724.4V2340.2H1696.7Z"/><path d="M1772.9 2336.6H1786.7V2422.3H1772.9Z"/><path d="M1766.0 2353.9H1793.6V2384.9H1766.0Z"/><path d="M1842.1 2421.6H1856.0V2527.5H1842.1Z"/><path d="M1835.2 2438.9H1862.9V2504.4H1835.2Z"/><path d="M1911.4 2324.5H1925.2V2479.9H1911.4Z"/><path d="M1904.5 2369.2H1932.1V2454.0H1904.5Z"/><path d="M1980.6 2255.4H1994.5V2341.1H1980.6Z"/><path d="M1973.7 2271.8H2001.4V2327.3H1973.7Z"/><path d="M2049.9 2377.0H2063.7V2442.5H2049.9Z"/><path d="M2043.0 2387.0H2070.7V2428.1H2043.0Z"/><path d="M2119.1 2502.8H2133.0V2543.3H2119.1Z"/><path d="M2112.2 2523.9H2139.9V2536.1H2112.2Z"/><path d="M2188.4 2392.2H2202.2V2473.6H2188.4Z"/><path d="M2181.5 2411.5H2209.2V2449.7H2181.5Z"/><path d="M2257.6 2341.8H2271.5V2397.8H2257.6Z"/><path d="M2250.7 2351.0H2278.4V2388.6H2250.7Z"/><path d="M2326.9 2390.8H2340.7V2461.2H2326.9Z"/><path d="M2320.0 2415.8H2347.7V2446.8H2320.0Z"/><path d="M2396.1 2510.9H2410.0V2544.7H2396.1Z"/><path d="M2389.2 2522.4H2416.9V2534.7H2389.2Z"/><path d="M2465.4 2400.9H2479.2V2456.9H2465.4Z"/><path d="M2458.5 2417.3H2486.2V2448.3H2458.5Z"/><path d="M2534.6 2338.1H2548.5V2431.0H2534.6Z"/><path d="M2527.7 2358.2H2555.4V2413.1H2527.7Z"/><path d="M2603.9 2396.5H2617.7V2505.9H2603.9Z"/><path d="M2597.0 2427.4H2624.7V2480.5H2597.0Z"/><path d="M2673.1 2489.3H2687.0V2537.5H2673.1Z"/><path d="M2666.2 2494.5H2693.9V2530.3H2666.2Z"/><path d="M2742.4 2410.1H2756.2V2467.0H2742.4Z"/><path d="M2735.5 2427.4H2763.2V2447.7H2735.5Z"/><path d="M2811.6 2331.7H2825.5V2419.4H2811.6Z"/><path d="M2804.7 2351.9H2832.4V2389.2H2804.7Z"/><path d="M2880.9 2415.0H2894.7V2499.5H2880.9Z"/><path d="M2874.0 2432.3H2901.7V2477.6H2874.0Z"/><path d="M2950.1 2490.2H2964.0V2536.1H2950.1Z"/><path d="M2943.2 2494.5H2970.9V2533.2H2943.2Z"/><path d="M3019.4 2405.8H3033.2V2471.3H3019.4Z"/><path d="M3012.5 2412.1H3040.2V2464.1H3012.5Z"/><path d="M3088.6 2314.2H3102.5V2439.0H3088.6Z"/><path d="M3081.7 2355.4H3109.4V2406.5H3081.7Z"/><path d="M3157.9 2401.4H3171.7V2522.6H3157.9Z"/><path d="M3151.0 2409.2H3178.7V2493.8H3151.0Z"/><path d="M3227.1 2475.5H3241.0V2537.5H3227.1Z"/><path d="M3220.2 2489.9H3247.9V2526.6H3220.2Z"/><path d="M3296.4 2397.1H3310.2V2480.5H3296.4Z"/><path d="M3289.5 2415.0H3317.2V2467.8H3289.5Z"/><path d="M3365.6 2304.1H3379.5V2446.8H3365.6Z"/><path d="M3358.7 2342.4H3386.4V2389.2H3358.7Z"/><path d="M3434.9 2415.3H3448.7V2528.3H3434.9Z"/><path d="M3428.0 2440.3H3455.7V2510.2H3428.0Z"/><path d="M3504.1 2476.3H3518.0V2541.0H3504.1Z"/><path d="M3497.2 2481.2H3524.9V2530.3H3497.2Z"/><path d="M3573.4 2392.7H3587.2V2468.3H3573.4Z"/><path d="M3566.5 2421.3H3594.2V2456.3H3566.5Z"/><path d="M3642.6 2309.4H3656.5V2458.2H3642.6Z"/><path d="M3635.7 2342.7H3663.4V2417.7H3635.7Z"/><path d="M3711.9 2413.3H3725.7V2521.6H3711.9Z"/><path d="M3705.0 2438.0H3732.7V2497.8H3705.0Z"/><path d="M3781.1 2469.4H3795.0V2527.9H3781.1Z"/><path d="M3774.2 2478.9H3801.9V2522.2H3774.2Z"/><path d="M3850.4 2398.4H3864.2V2462.6H3850.4Z"/><path d="M3843.5 2423.5H3871.2V2451.6H3843.5Z"/><path d="M3919.6 2293.6H3933.5V2484.6H3919.6Z"/><path d="M3912.7 2319.7H3940.4V2402.5H3912.7Z"/><path d="M3988.9 2407.9H4002.7V2527.5H3988.9Z"/><path d="M3982.0 2426.4H4009.7V2490.0H3982.0Z"/><path d="M4058.1 2457.9H4072.0V2525.7H4058.1Z"/><path d="M4051.2 2476.8H4078.9V2513.2H4051.2Z"/><path d="M4127.4 2396.1H4141.2V2483.9H4127.4Z"/><path d="M4120.4 2433.9H4148.2V2463.9H4120.4Z"/><path d="M4196.6 2291.1H4210.5V2532.1H4196.6Z"/><path d="M4189.7 2338.2H4217.4V2482.8H4189.7Z"/><path d="M4265.9 2387.5H4279.7V2561.4H4265.9Z"/><path d="M4258.9 2406.8H4286.7V2503.2H4258.9Z"/><path d="M4335.1 2446.1H4349.0V2522.1H4335.1Z"/><path d="M4328.2 2475.7H4355.9V2515.7H4328.2Z"/><path d="M4404.4 2388.9H4418.2V2492.5H4404.4Z"/><path d="M4397.4 2426.4H4425.2V2472.1H4397.4Z"/></g>
<polyline points="256.3,2349.0 325.6,2397.3 394.8,2507.3 464.1,2532.3 533.3,2432.1 602.5,2386.2 671.8,2473.9 741.0,2514.2 810.3,2408.3 879.5,2419.4 948.8,2475.1 1018.0,2551.7 1087.3,2387.4 1156.5,2462.6 1225.8,2473.7 1295.0,2489.0 1364.3,2481.7 1433.5,2352.1 1502.8,2447.2 1572.0,2530.7 1641.3,2464.5 1710.5,2343.5 1779.8,2327.6 1849.0,2467.3 1918.3,2429.9 1987.5,2272.9 2056.8,2467.3 2126.1,2537.9 2195.3,2434.2 2264.6,2405.4 2333.8,2432.8 2403.1,2530.7 2472.3,2427.0 2541.6,2386.7 2610.8,2431.3 2680.1,2506.2 2749.3,2429.9 2818.6,2392.4 2887.8,2501.3 2957.1,2480.3 3026.3,2442.9 3095.6,2313.2 3164.8,2418.4 3234.1,2488.9 3303.3,2415.5 3372.6,2297.4 3441.8,2389.6 3511.1,2473.1 3580.3,2389.4 3649.6,2266.5 3718.8,2403.6 3788.1,2465.4 3857.3,2394.1 3926.6,2291.8 3995.8,2388.2 4065.1,2459.6 4134.3,2456.1 4203.6,2283.9 4272.8,2391.8 4342.1,2484.6 4411.3,2434.6" fill="none" stroke="#ff0000" stroke-width="5.85" stroke-linejoin="round" stroke-linecap="square"/>
<polyline points="256.3,2349.0 325.6,2393.1 394.8,2504.5 464.1,2526.8 533.3,2426.5 602.5,2382.0 671.8,2472.5 741.0,2533.7 810.3,2402.7 879.5,2419.4 948.8,2476.5 1018.0,2541.9 1087.3,2397.2 1156.5,2447.3 1225.8,2501.6 1295.0,2512.7 1364.3,2444.3 1433.5,2356.4 1502.8,2450.1 1572.0,2499.0 1641.3,2396.8 1710.5,2320.4 1779.8,2370.8 1849.0,2467.3 1918.3,2406.8 1987.5,2301.7 2056.8,2421.2 2126.1,2523.5 2195.3,2428.5 2264.6,2368.0 2333.8,2428.5 2403.1,2527.8 2472.3,2427.0 2541.6,2383.2 2610.8,2452.9 2680.1,2513.4 2749.3,2434.2 2818.6,2377.5 2887.8,2458.7 2957.1,2509.1 3026.3,2430.5 3095.6,2380.9 3164.8,2451.5 3234.1,2506.2 3303.3,2435.7 3372.6,2370.8 3441.8,2471.7 3511.1,2503.3 3580.3,2441.6 3649.6,2386.2 3718.8,2473.3 3788.1,2501.8 3857.3,2432.1 3926.6,2375.7 3995.8,2465.0 4065.1,2491.8 4134.3,2434.6 4203.6,2404.3 4272.8,2465.0 4342.1,2491.8 4411.3,2427.5" fill="none" stroke="#0000ff" stroke-width="5.85" stroke-linejoin="round" stroke-linecap="square"/>
<path d="M242.5 2349.0h27.7M311.7 2393.1h27.7M380.9 2503.1h27.7M450.2 2529.6h27.7M519.4 2429.3h27.7M588.7 2383.4h27.7M657.9 2471.1h27.7M727.2 2539.3h27.7M796.4 2408.3h27.7M865.7 2419.4h27.7M934.9 2476.5h27.7M1004.2 2551.7h27.7M1073.5 2395.8h27.7M1142.7 2441.7h27.7M1212.0 2497.4h27.7M1281.2 2518.3h27.7M1350.5 2447.7h27.7M1419.7 2352.7h27.7M1489.0 2451.5h27.7M1558.2 2504.8h27.7M1627.5 2429.9h27.7M1696.7 2319.0h27.7M1766.0 2360.8h27.7M1835.2 2473.1h27.7M1904.5 2418.4h27.7M1973.7 2302.3h27.7M2043.0 2405.4h27.7M2112.2 2535.0h27.7M2181.5 2434.2h27.7M2250.7 2368.0h27.7M2320.0 2431.3h27.7M2389.2 2530.7h27.7M2458.5 2429.9h27.7M2527.7 2379.5h27.7M2597.0 2447.7h27.7M2666.2 2527.8h27.7M2735.5 2432.8h27.7M2804.7 2370.8h27.7M2874.0 2456.4h27.7M2943.2 2514.0h27.7M3012.5 2429.3h27.7M3081.7 2375.2h27.7M3151.0 2452.4h27.7M3220.2 2514.9h27.7M3289.5 2437.1h27.7M3358.7 2366.5h27.7M3428.0 2470.2h27.7M3497.2 2507.7h27.7M3566.5 2440.0h27.7M3635.7 2378.9h27.7M3705.0 2474.9h27.7M3774.2 2512.9h27.7M3843.5 2435.3h27.7M3912.7 2372.1h27.7M3982.0 2468.6h27.7M4051.2 2502.5h27.7M4120.4 2441.8h27.7M4189.7 2387.1h27.7M4258.9 2451.4h27.7M4328.2 2488.2h27.7M4397.4 2453.6h27.7" stroke="#000" stroke-width="4.00" stroke-linecap="square" fill="none"/>
</g>
<rect x="221.7" y="2047.5" width="4223.3" height="623.5" fill="none" stroke="#000" stroke-width="6.20" stroke-linejoin="miter"/>
<path d="M256.3 2671.0v25.6M533.3 2671.0v25.6M810.3 2671.0v25.6M1087.3 2671.0v25.6M1364.3 2671.0v25.6M1641.3 2671.0v25.6M1918.3 2671.0v25.6M2195.3 2671.0v25.6M2472.3 2671.0v25.6M2749.3 2671.0v25.6M3026.3 2671.0v25.6M3303.3 2671.0v25.6M3580.3 2671.0v25.6M3857.3 2671.0v25.6M4134.3 2671.0v25.6M4411.3 2671.0v25.6M221.7 2535.4h-25.6M221.7 2375.4h-25.6M221.7 2215.4h-25.6M221.7 2055.4h-25.6" stroke="#000" stroke-width="6.20" fill="none"/>
<text x="133.4" y="2557.2" font-size="61.13" textLength="37.2" lengthAdjust="spacingAndGlyphs" fill="#000">2</text>
<text x="133.4" y="2397.2" font-size="61.13" textLength="37.2" lengthAdjust="spacingAndGlyphs" fill="#000">4</text>
<text x="133.4" y="2237.2" font-size="61.13" textLength="37.2" lengthAdjust="spacingAndGlyphs" fill="#000">6</text>
<text x="133.4" y="2077.2" font-size="61.13" textLength="37.2" lengthAdjust="spacingAndGlyphs" fill="#000">8</text>
<text x="221.8" y="2021.9" font-size="69.49" textLength="149.4" lengthAdjust="spacingAndGlyphs" fill="#000">10m</text>
<text x="392.3" y="2021.9" font-size="69.49" textLength="157.2" lengthAdjust="spacingAndGlyphs" fill="#000">wind</text>
<text x="570.7" y="2021.9" font-size="69.49" textLength="200.9" lengthAdjust="spacingAndGlyphs" fill="#000">speed</text>
<text x="792.7" y="2021.9" font-size="69.49" textLength="173.7" lengthAdjust="spacingAndGlyphs" fill="#000">(m/s)</text>
<clipPath id="c3"><rect x="221.7" y="2815.5" width="4223.3" height="623.5"/></clipPath>
<path d="M256.3 3439.0V2815.5M533.3 3439.0V2815.5M810.3 3439.0V2815.5M1087.3 3439.0V2815.5M1364.3 3439.0V2815.5M1641.3 3439.0V2815.5M1918.3 3439.0V2815.5M2195.3 3439.0V2815.5M2472.3 3439.0V2815.5M2749.3 3439.0V2815.5M3026.3 3439.0V2815.5M3303.3 3439.0V2815.5M3580.3 3439.0V2815.5M3857.3 3439.0V2815.5M4134.3 3439.0V2815.5M4411.3 3439.0V2815.5M221.7 3384.5H4445.0M221.7 3214.8H4445.0M221.7 3045.2H4445.0M221.7 2875.6H4445.0" stroke="#d0d0d0" stroke-width="4.02" stroke-dasharray="14.8 7.3" fill="none"/>
<g clip-path="url(#c3)">
<path d="M325.6 3332.7V3351.4M394.8 3380.3V3410.8M464.1 3040.5V3052.4M533.3 3140.7V3164.5M602.5 3274.3V3297.0M671.8 3359.9V3387.1M741.0 2999.7V3023.5M810.3 3104.4V3150.9M879.5 3261.3V3293.6M948.8 3310.6V3354.8M1018.0 2984.4V3001.4M1087.3 3091.4V3128.8M1156.5 3227.4V3280.0M1225.8 3285.1V3341.2M1295.0 2939.6V2960.6M1364.3 3082.9V3132.2M1433.5 3229.1V3305.5M1502.8 3329.3V3366.7M1572.0 2934.5V2965.7M1641.3 3042.2V3111.8M1710.5 3247.7V3284.4M1779.8 3320.8V3349.7M1849.0 2933.4V2975.9M1918.3 3033.7V3089.7M1987.5 3205.3V3259.6M2056.8 3297.0V3329.3M2126.1 2935.1V2964.0M2195.3 3004.8V3088.0M2264.6 3194.1V3256.2M2333.8 3283.4V3356.5M2403.1 2929.0V2960.6M2472.3 3020.1V3089.7M2541.6 3195.1V3268.1M2610.8 3267.5V3349.7M2680.1 2915.4V2967.4M2749.3 3017.4V3088.0M2818.6 3176.4V3257.9M2887.8 3268.8V3349.7M2957.1 2910.7V2991.2M3026.3 2999.7V3087.4M3095.6 3150.9V3244.3M3164.8 3234.2V3329.3M3234.1 2891.0V2975.2M3303.3 2966.4V3082.9M3372.6 3157.7V3239.3M3441.8 3224.0V3338.8M3511.1 2875.7V2978.6M3580.3 2965.0V3068.3M3649.6 3153.3V3324.2M3718.8 3230.8V3331.0M3788.1 2876.7V3038.8M3857.3 2959.6V3105.0M3926.6 3155.3V3288.5M3995.8 3220.6V3320.8M4065.1 2868.9V3008.2M4134.3 2948.7V3188.3M4203.6 3127.1V3312.3M4272.8 3213.8V3349.7M4342.1 2841.7V3101.6M4411.3 2944.7V3157.7" stroke="#000" stroke-width="4.00" stroke-linecap="square" fill="none"/>
<g fill="#99fd66" stroke="#000" stroke-width="4.00" stroke-linejoin="miter"><path d="M249.4 3201.9H263.2V3201.9H249.4Z"/><path d="M242.5 3201.9H270.2V3201.9H242.5Z"/><path d="M318.6 3337.2H332.5V3344.5H318.6Z"/><path d="M311.7 3338.6H339.4V3342.8H311.7Z"/><path d="M387.9 3392.9H401.7V3400.6H387.9Z"/><path d="M380.9 3395.0H408.7V3398.9H380.9Z"/><path d="M457.1 3045.0H471.0V3050.6H457.1Z"/><path d="M450.2 3046.4H477.9V3048.9H450.2Z"/><path d="M526.4 3146.9H540.2V3153.5H526.4Z"/><path d="M519.4 3148.3H547.1V3152.2H519.4Z"/><path d="M595.6 3283.5H609.5V3290.1H595.6Z"/><path d="M588.7 3284.9H616.4V3288.8H588.7Z"/><path d="M664.9 3365.1H678.7V3376.8H664.9Z"/><path d="M657.9 3367.8H685.6V3374.4H657.9Z"/><path d="M734.1 3014.4H748.0V3021.0H734.1Z"/><path d="M727.2 3015.8H754.9V3019.6H727.2Z"/><path d="M803.4 3116.3H817.2V3132.1H803.4Z"/><path d="M796.4 3118.7H824.1V3129.7H796.4Z"/><path d="M872.6 3264.8H886.5V3274.8H872.6Z"/><path d="M865.7 3267.2H893.4V3273.1H865.7Z"/><path d="M941.9 3331.1H955.7V3342.8H941.9Z"/><path d="M934.9 3333.5H962.6V3340.4H934.9Z"/><path d="M1011.1 2989.6H1025.0V2997.9H1011.1Z"/><path d="M1004.2 2991.3H1031.9V2996.2H1004.2Z"/><path d="M1080.4 3101.7H1094.2V3112.7H1080.4Z"/><path d="M1073.5 3103.4H1101.1V3110.7H1073.5Z"/><path d="M1149.6 3248.9H1163.5V3261.2H1149.6Z"/><path d="M1142.7 3251.2H1170.4V3258.9H1142.7Z"/><path d="M1218.9 3297.1H1232.7V3329.2H1218.9Z"/><path d="M1212.0 3307.3H1239.6V3325.8H1212.0Z"/><path d="M1288.1 2949.9H1302.0V2958.8H1288.1Z"/><path d="M1281.2 2951.2H1308.9V2957.1H1281.2Z"/><path d="M1357.4 3091.5H1371.2V3116.8H1357.4Z"/><path d="M1350.5 3096.0H1378.1V3114.1H1350.5Z"/><path d="M1426.6 3242.1H1440.5V3269.1H1426.6Z"/><path d="M1419.7 3246.8H1447.4V3260.6H1419.7Z"/><path d="M1495.9 3344.7H1509.7V3358.8H1495.9Z"/><path d="M1489.0 3348.1H1516.6V3354.7H1489.0Z"/><path d="M1565.1 2943.1H1579.0V2959.8H1565.1Z"/><path d="M1558.2 2944.4H1585.9V2958.8H1558.2Z"/><path d="M1634.4 3059.3H1648.2V3103.2H1634.4Z"/><path d="M1627.5 3066.7H1655.1V3097.5H1627.5Z"/><path d="M1703.6 3254.6H1717.5V3278.2H1703.6Z"/><path d="M1696.7 3259.1H1724.4V3267.0H1696.7Z"/><path d="M1772.9 3326.0H1786.7V3341.8H1772.9Z"/><path d="M1766.0 3331.1H1793.6V3336.0H1766.0Z"/><path d="M1842.1 2945.4H1856.0V2955.4H1842.1Z"/><path d="M1835.2 2947.8H1862.9V2954.4H1835.2Z"/><path d="M1911.4 3040.6H1925.2V3076.1H1911.4Z"/><path d="M1904.5 3048.4H1932.1V3072.7H1904.5Z"/><path d="M1980.6 3213.9H1994.5V3240.9H1980.6Z"/><path d="M1973.7 3221.7H2001.4V3234.1H1973.7Z"/><path d="M2049.9 3305.6H2063.7V3322.4H2049.9Z"/><path d="M2043.0 3307.3H2070.7V3318.0H2043.0Z"/><path d="M2119.1 2947.1H2133.0V2960.5H2119.1Z"/><path d="M2112.2 2952.2H2139.9V2959.8H2112.2Z"/><path d="M2188.4 3028.0H2202.2V3072.7H2188.4Z"/><path d="M2181.5 3041.6H2209.2V3063.1H2181.5Z"/><path d="M2257.6 3201.3H2271.5V3242.5H2257.6Z"/><path d="M2250.7 3207.1H2278.4V3236.4H2250.7Z"/><path d="M2326.9 3301.2H2340.7V3344.5H2326.9Z"/><path d="M2320.0 3309.0H2347.7V3334.3H2320.0Z"/><path d="M2396.1 2941.0H2410.0V2958.8H2396.1Z"/><path d="M2389.2 2945.4H2416.9V2957.8H2389.2Z"/><path d="M2465.4 3038.9H2479.2V3087.9H2465.4Z"/><path d="M2458.5 3045.7H2486.2V3064.2H2458.5Z"/><path d="M2534.6 3201.3H2548.5V3240.9H2534.6Z"/><path d="M2527.7 3209.5H2555.4V3235.1H2527.7Z"/><path d="M2603.9 3290.3H2617.7V3337.7H2603.9Z"/><path d="M2597.0 3313.4H2624.7V3332.6H2597.0Z"/><path d="M2673.1 2932.9H2687.0V2965.6H2673.1Z"/><path d="M2666.2 2940.3H2693.9V2955.4H2666.2Z"/><path d="M2742.4 3033.8H2756.2V3071.0H2742.4Z"/><path d="M2735.5 3043.0H2763.2V3065.2H2735.5Z"/><path d="M2811.6 3200.3H2825.5V3234.1H2811.6Z"/><path d="M2804.7 3208.1H2832.4V3225.6H2804.7Z"/><path d="M2880.9 3285.2H2894.7V3336.0H2880.9Z"/><path d="M2874.0 3300.5H2901.7V3327.5H2874.0Z"/><path d="M2950.1 2925.0H2964.0V2960.5H2950.1Z"/><path d="M2943.2 2933.5H2970.9V2945.2H2943.2Z"/><path d="M3019.4 3010.0H3033.2V3064.2H3019.4Z"/><path d="M3012.5 3026.3H3040.2V3052.9H3012.5Z"/><path d="M3088.6 3180.9H3102.5V3227.3H3088.6Z"/><path d="M3081.7 3192.5H3109.4V3220.5H3081.7Z"/><path d="M3157.9 3254.0H3171.7V3319.0H3157.9Z"/><path d="M3151.0 3285.2H3178.7V3314.6H3151.0Z"/><path d="M3227.1 2906.4H3241.0V2952.0H3227.1Z"/><path d="M3220.2 2918.3H3247.9V2942.9H3220.2Z"/><path d="M3296.4 2990.6H3310.2V3068.6H3296.4Z"/><path d="M3289.5 3013.4H3317.2V3039.4H3289.5Z"/><path d="M3365.6 3171.4H3379.5V3222.8H3365.6Z"/><path d="M3358.7 3179.9H3386.4V3213.7H3358.7Z"/><path d="M3434.9 3262.5H3448.7V3312.2H3434.9Z"/><path d="M3428.0 3272.7H3455.7V3306.4H3428.0Z"/><path d="M3504.1 2904.7H3518.0V2945.2H3504.1Z"/><path d="M3497.2 2914.9H3524.9V2940.1H3497.2Z"/><path d="M3573.4 2981.8H3587.2V3049.5H3573.4Z"/><path d="M3566.5 2997.4H3594.2V3026.8H3566.5Z"/><path d="M3642.6 3169.7H3656.5V3223.9H3642.6Z"/><path d="M3635.7 3174.8H3663.4V3203.5H3635.7Z"/><path d="M3711.9 3251.2H3725.7V3307.1H3711.9Z"/><path d="M3705.0 3266.5H3732.7V3295.2H3705.0Z"/><path d="M3781.1 2896.8H3795.0V2936.7H3781.1Z"/><path d="M3774.2 2902.3H3801.9V2928.2H3774.2Z"/><path d="M3850.4 2962.4H3864.2V3025.1H3850.4Z"/><path d="M3843.5 2971.9H3871.2V3012.2H3843.5Z"/><path d="M3919.6 3169.7H3933.5V3205.2H3919.6Z"/><path d="M3912.7 3174.8H3940.4V3197.7H3912.7Z"/><path d="M3988.9 3240.0H4002.7V3303.0H3988.9Z"/><path d="M3982.0 3253.6H4009.7V3295.2H3982.0Z"/><path d="M4058.1 2903.6H4072.0V2953.7H4058.1Z"/><path d="M4051.2 2912.5H4078.9V2930.6H4051.2Z"/><path d="M4127.4 2966.8H4141.2V3032.6H4127.4Z"/><path d="M4120.4 2978.4H4148.2V3013.2H4120.4Z"/><path d="M4196.6 3177.5H4210.5V3234.1H4196.6Z"/><path d="M4189.7 3184.3H4217.4V3203.5H4189.7Z"/><path d="M4265.9 3242.1H4279.7V3316.6H4265.9Z"/><path d="M4258.9 3270.6H4286.7V3296.2H4258.9Z"/><path d="M4335.1 2907.0H4349.0V2967.3H4335.1Z"/><path d="M4328.2 2913.2H4355.9V2943.5H4328.2Z"/><path d="M4404.4 2969.2H4418.2V3052.3H4404.4Z"/><path d="M4397.4 2979.4H4425.2V3028.5H4397.4Z"/></g>
<polyline points="256.3,3201.9 325.6,3340.5 394.8,3393.9 464.1,3047.3 533.3,3149.9 602.5,3285.1 671.8,3365.0 741.0,3016.7 810.3,3127.1 879.5,3269.8 948.8,3337.8 1018.0,2989.5 1087.3,3106.7 1156.5,3256.2 1225.8,3318.4 1295.0,2950.4 1364.3,3108.4 1433.5,3257.9 1502.8,3354.8 1572.0,2964.0 1641.3,3082.9 1710.5,3263.0 1779.8,3339.5 1849.0,2952.1 1918.3,3064.3 1987.5,3230.8 2056.8,3319.1 2126.1,2969.1 2195.3,3057.5 2264.6,3242.7 2333.8,3337.8 2403.1,2962.3 2472.3,3077.9 2541.6,3230.8 2610.8,3320.8 2680.1,2974.2 2749.3,3060.9 2818.6,3230.8 2887.8,3302.1 2957.1,2948.7 3026.3,3040.5 3095.6,3208.7 3164.8,3310.6 3234.1,2958.9 3303.3,3013.3 3372.6,3220.6 3441.8,3299.4 3511.1,2950.4 3580.3,2996.3 3649.6,3224.0 3718.8,3291.9 3788.1,2919.9 3857.3,2948.1 3926.6,3200.2 3995.8,3274.9 4065.1,2909.7 4134.3,2977.6 4203.6,3197.5 4272.8,3283.4 4342.1,2909.7 4411.3,2960.6" fill="none" stroke="#ff0000" stroke-width="5.85" stroke-linejoin="round" stroke-linecap="square"/>
<polyline points="256.3,3201.9 325.6,3340.5 394.8,3393.2 464.1,3047.3 533.3,3149.9 602.5,3285.1 671.8,3368.4 741.0,3016.7 810.3,3125.4 879.5,3269.8 948.8,3332.7 1018.0,2994.6 1087.3,3106.7 1156.5,3254.5 1225.8,3310.6 1295.0,2957.2 1364.3,3105.0 1433.5,3255.2 1502.8,3348.0 1572.0,2953.8 1641.3,3077.9 1710.5,3264.1 1779.8,3331.0 1849.0,2953.8 1918.3,3057.5 1987.5,3227.4 2056.8,3307.2 2126.1,2957.2 2195.3,3050.7 2264.6,3225.7 2333.8,3314.0 2403.1,2952.1 2472.3,3054.1 2541.6,3227.4 2610.8,3319.1 2680.1,2950.4 2749.3,3052.4 2818.6,3218.9 2887.8,3308.9 2957.1,2943.6 3026.3,3038.8 3095.6,3207.0 3164.8,3293.6 3234.1,2931.7 3303.3,3020.1 3372.6,3200.2 3441.8,3285.1 3511.1,2926.6 3580.3,3009.9 3649.6,3193.4 3718.8,3276.6 3788.1,2919.9 3857.3,2998.0 3926.6,3191.7 3995.8,3273.2 4065.1,2924.9 4134.3,2999.7 4203.6,3196.8 4272.8,3278.3 4342.1,2933.4 4411.3,3015.0" fill="none" stroke="#0000ff" stroke-width="5.85" stroke-linejoin="round" stroke-linecap="square"/>
<path d="M242.5 3201.9h27.7M311.7 3340.5h27.7M380.9 3396.6h27.7M450.2 3047.3h27.7M519.4 3149.9h27.7M588.7 3286.8h27.7M657.9 3370.8h27.7M727.2 3016.7h27.7M796.4 3125.4h27.7M865.7 3270.9h27.7M934.9 3337.8h27.7M1004.2 2994.6h27.7M1073.5 3106.7h27.7M1142.7 3256.2h27.7M1212.0 3312.3h27.7M1281.2 2955.5h27.7M1350.5 3103.3h27.7M1419.7 3252.8h27.7M1489.0 3351.4h27.7M1558.2 2952.1h27.7M1627.5 3082.9h27.7M1696.7 3263.0h27.7M1766.0 3333.4h27.7M1835.2 2950.4h27.7M1904.5 3060.9h27.7M1973.7 3227.4h27.7M2043.0 3312.3h27.7M2112.2 2957.2h27.7M2181.5 3055.8h27.7M2250.7 3220.6h27.7M2320.0 3321.8h27.7M2389.2 2952.1h27.7M2458.5 3055.8h27.7M2527.7 3229.1h27.7M2597.0 3329.3h27.7M2666.2 2948.1h27.7M2735.5 3054.1h27.7M2804.7 3215.5h27.7M2874.0 3308.9h27.7M2943.2 2938.5h27.7M3012.5 3036.4h27.7M3081.7 3204.3h27.7M3151.0 3302.1h27.7M3220.2 2929.0h27.7M3289.5 3020.8h27.7M3358.7 3195.1h27.7M3428.0 3291.9h27.7M3497.2 2926.6h27.7M3566.5 3007.2h27.7M3635.7 3190.0h27.7M3705.0 3285.1h27.7M3774.2 2912.0h27.7M3843.5 2995.6h27.7M3912.7 3188.3h27.7M3982.0 3285.1h27.7M4051.2 2920.9h27.7M4120.4 2993.6h27.7M4189.7 3194.1h27.7M4258.9 3285.1h27.7M4328.2 2922.2h27.7M4397.4 3003.1h27.7" stroke="#000" stroke-width="4.00" stroke-linecap="square" fill="none"/>
</g>
<rect x="221.7" y="2815.5" width="4223.3" height="623.5" fill="none" stroke="#000" stroke-width="6.20" stroke-linejoin="miter"/>
<path d="M256.3 3439.0v25.6M533.3 3439.0v25.6M810.3 3439.0v25.6M1087.3 3439.0v25.6M1364.3 3439.0v25.6M1641.3 3439.0v25.6M1918.3 3439.0v25.6M2195.3 3439.0v25.6M2472.3 3439.0v25.6M2749.3 3439.0v25.6M3026.3 3439.0v25.6M3303.3 3439.0v25.6M3580.3 3439.0v25.6M3857.3 3439.0v25.6M4134.3 3439.0v25.6M4411.3 3439.0v25.6M221.7 3384.5h-25.6M221.7 3214.8h-25.6M221.7 3045.2h-25.6M221.7 2875.6h-25.6" stroke="#000" stroke-width="6.20" fill="none"/>
<text x="96.2" y="3406.3" font-size="61.13" textLength="74.4" lengthAdjust="spacingAndGlyphs" fill="#000">25</text>
<text x="96.2" y="3236.7" font-size="61.13" textLength="74.4" lengthAdjust="spacingAndGlyphs" fill="#000">30</text>
<text x="96.2" y="3067.0" font-size="61.13" textLength="74.4" lengthAdjust="spacingAndGlyphs" fill="#000">35</text>
<text x="96.2" y="2897.4" font-size="61.13" textLength="74.4" lengthAdjust="spacingAndGlyphs" fill="#000">40</text>
<text x="221.8" y="2789.9" font-size="69.49" textLength="107.1" lengthAdjust="spacingAndGlyphs" fill="#000">2m</text>
<text x="350.0" y="2789.9" font-size="69.49" textLength="418.0" lengthAdjust="spacingAndGlyphs" fill="#000">temperature</text>
<text x="789.1" y="2789.9" font-size="69.49" textLength="126.6" lengthAdjust="spacingAndGlyphs" fill="#000">(°C)</text>
<text x="199.0" y="3534.3" font-size="61.13" textLength="114.5" lengthAdjust="spacingAndGlyphs" fill="#000">12Z</text>
<text x="168.5" y="3600.0" font-size="61.13" textLength="175.6" lengthAdjust="spacingAndGlyphs" fill="#000">05Apr</text>
<text x="476.0" y="3534.3" font-size="61.13" textLength="114.5" lengthAdjust="spacingAndGlyphs" fill="#000">12Z</text>
<text x="445.5" y="3600.0" font-size="61.13" textLength="175.6" lengthAdjust="spacingAndGlyphs" fill="#000">06Apr</text>
<text x="753.0" y="3534.3" font-size="61.13" textLength="114.5" lengthAdjust="spacingAndGlyphs" fill="#000">12Z</text>
<text x="722.5" y="3600.0" font-size="61.13" textLength="175.6" lengthAdjust="spacingAndGlyphs" fill="#000">07Apr</text>
<text x="1030.0" y="3534.3" font-size="61.13" textLength="114.5" lengthAdjust="spacingAndGlyphs" fill="#000">12Z</text>
<text x="999.5" y="3600.0" font-size="61.13" textLength="175.6" lengthAdjust="spacingAndGlyphs" fill="#000">08Apr</text>
<text x="1307.0" y="3534.3" font-size="61.13" textLength="114.5" lengthAdjust="spacingAndGlyphs" fill="#000">12Z</text>
<text x="1276.5" y="3600.0" font-size="61.13" textLength="175.6" lengthAdjust="spacingAndGlyphs" fill="#000">09Apr</text>
<text x="1584.0" y="3534.3" font-size="61.13" textLength="114.5" lengthAdjust="spacingAndGlyphs" fill="#000">12Z</text>
<text x="1553.5" y="3600.0" font-size="61.13" textLength="175.6" lengthAdjust="spacingAndGlyphs" fill="#000">10Apr</text>
<text x="1861.0" y="3534.3" font-size="61.13" textLength="114.5" lengthAdjust="spacingAndGlyphs" fill="#000">12Z</text>
<text x="1830.5" y="3600.0" font-size="61.13" textLength="175.6" lengthAdjust="spacingAndGlyphs" fill="#000">11Apr</text>
<text x="2138.0" y="3534.3" font-size="61.13" textLength="114.5" lengthAdjust="spacingAndGlyphs" fill="#000">12Z</text>
<text x="2107.5" y="3600.0" font-size="61.13" textLength="175.6" lengthAdjust="spacingAndGlyphs" fill="#000">12Apr</text>
<text x="2415.0" y="3534.3" font-size="61.13" textLength="114.5" lengthAdjust="spacingAndGlyphs" fill="#000">12Z</text>
<text x="2384.5" y="3600.0" font-size="61.13" textLength="175.6" lengthAdjust="spacingAndGlyphs" fill="#000">13Apr</text>
<text x="2692.0" y="3534.3" font-size="61.13" textLength="114.5" lengthAdjust="spacingAndGlyphs" fill="#000">12Z</text>
<text x="2661.5" y="3600.0" font-size="61.13" textLength="175.6" lengthAdjust="spacingAndGlyphs" fill="#000">14Apr</text>
<text x="2969.0" y="3534.3" font-size="61.13" textLength="114.5" lengthAdjust="spacingAndGlyphs" fill="#000">12Z</text>
<text x="2938.5" y="3600.0" font-size="61.13" textLength="175.6" lengthAdjust="spacingAndGlyphs" fill="#000">15Apr</text>
<text x="3246.0" y="3534.3" font-size="61.13" textLength="114.5" lengthAdjust="spacingAndGlyphs" fill="#000">12Z</text>
<text x="3215.5" y="3600.0" font-size="61.13" textLength="175.6" lengthAdjust="spacingAndGlyphs" fill="#000">16Apr</text>
<text x="3523.0" y="3534.3" font-size="61.13" textLength="114.5" lengthAdjust="spacingAndGlyphs" fill="#000">12Z</text>
<text x="3492.5" y="3600.0" font-size="61.13" textLength="175.6" lengthAdjust="spacingAndGlyphs" fill="#000">17Apr</text>
<text x="3800.0" y="3534.3" font-size="61.13" textLength="114.5" lengthAdjust="spacingAndGlyphs" fill="#000">12Z</text>
<text x="3769.5" y="3600.0" font-size="61.13" textLength="175.6" lengthAdjust="spacingAndGlyphs" fill="#000">18Apr</text>
<text x="4077.0" y="3534.3" font-size="61.13" textLength="114.5" lengthAdjust="spacingAndGlyphs" fill="#000">12Z</text>
<text x="4046.5" y="3600.0" font-size="61.13" textLength="175.6" lengthAdjust="spacingAndGlyphs" fill="#000">19Apr</text>
<text x="4354.0" y="3534.3" font-size="61.13" textLength="114.5" lengthAdjust="spacingAndGlyphs" fill="#000">12Z</text>
<text x="4323.5" y="3600.0" font-size="61.13" textLength="175.6" lengthAdjust="spacingAndGlyphs" fill="#000">20Apr</text>
<path d="M2957.4 84V458.7" stroke="#000" stroke-width="4.00"/>
<g fill="#99fd66" stroke="#000" stroke-width="4.00"><rect x="2933.4" y="147.2" width="48.2" height="248.2"/><rect x="2909.2" y="209.0" width="96.5" height="124.6"/><path d="M2909.2 271H3005.7"/></g>
<text x="3052.1" y="99.6" font-size="53.50" textLength="111.6" lengthAdjust="spacingAndGlyphs" fill="#000">max</text>
<text x="3053.5" y="161.2" font-size="53.50" textLength="113.8" lengthAdjust="spacingAndGlyphs" fill="#000">90%</text>
<text x="3052.5" y="222.8" font-size="53.50" textLength="113.8" lengthAdjust="spacingAndGlyphs" fill="#000">75%</text>
<text x="3052.1" y="284.9" font-size="53.50" textLength="191.9" lengthAdjust="spacingAndGlyphs" fill="#000">median</text>
<text x="3052.9" y="346.3" font-size="53.50" textLength="113.8" lengthAdjust="spacingAndGlyphs" fill="#000">25%</text>
<text x="3051.1" y="407.7" font-size="53.50" textLength="113.8" lengthAdjust="spacingAndGlyphs" fill="#000">10%</text>
<text x="3052.1" y="469.2" font-size="53.50" textLength="96.5" lengthAdjust="spacingAndGlyphs" fill="#000">min</text>
<path d="M3667 206.4H3807" stroke="#ff0000" stroke-width="5.85"/>
<path d="M3667 339.4H3807" stroke="#0000ff" stroke-width="5.85"/>
<text x="3855.8" y="229.7" font-size="70.22" textLength="242.9" lengthAdjust="spacingAndGlyphs" fill="#000">Control</text>
<text x="3854.4" y="362.6" font-size="70.22" textLength="329.5" lengthAdjust="spacingAndGlyphs" fill="#000">Ensemble</text>
<text x="4205.3" y="362.6" font-size="70.22" textLength="183.1" lengthAdjust="spacingAndGlyphs" fill="#000">Mean</text>
</svg></body></html>
